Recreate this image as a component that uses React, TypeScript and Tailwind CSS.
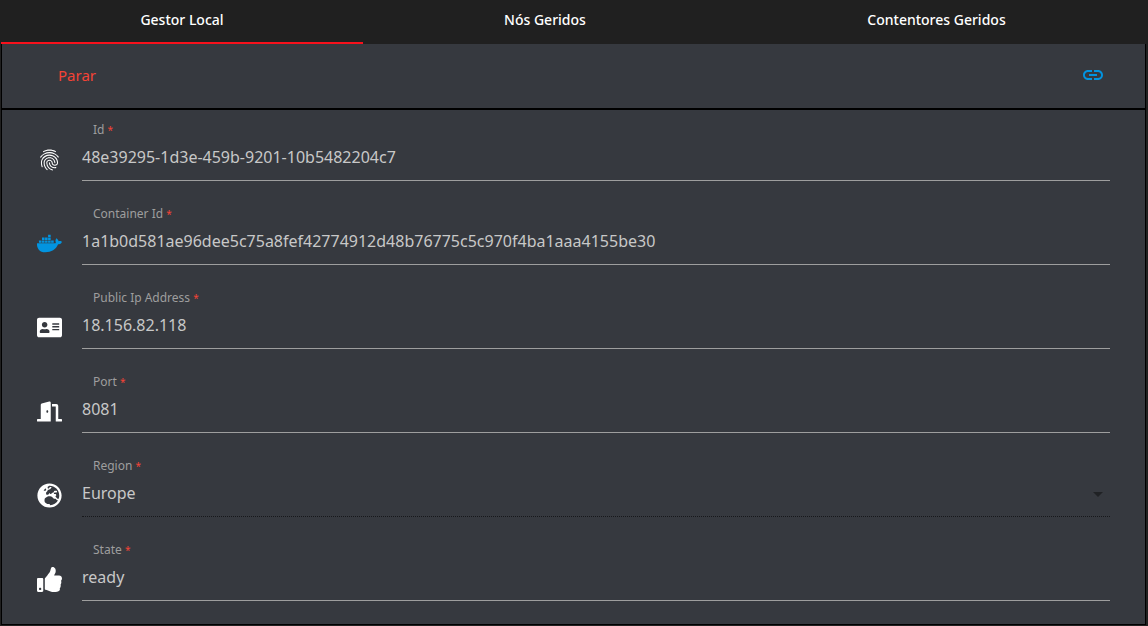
import type { ReactNode } from "react";
import {
  FaAddressCard,
  FaDocker,
  FaDoorOpen,
  FaGlobeEurope,
  FaThumbsUp,
} from "react-icons/fa";
import { MdArrowDropDown, MdFingerprint, MdLink } from "react-icons/md";

const tabs = ["Gestor Local", "Nós Geridos", "Contentores Geridos"];

type Field = {
  id: string;
  label: string;
  value: string;
  icon: ReactNode;
  select?: boolean;
};

const fields: Field[] = [
  {
    id: "id",
    label: "Id",
    value: "48e39295-1d3e-459b-9201-10b5482204c7",
    icon: <MdFingerprint size={26} />,
  },
  {
    id: "containerId",
    label: "Container Id",
    value: "1a1b0d581ae96dee5c75a8fef42774912d48b76775c5c970f4ba1aaa4155be30",
    icon: <FaDocker size={25} className="text-[#0294e0]" />,
  },
  {
    id: "publicIpAddress",
    label: "Public Ip Address",
    value: "18.156.82.118",
    icon: <FaAddressCard size={25} />,
  },
  { id: "port", label: "Port", value: "8081", icon: <FaDoorOpen size={25} /> },
  {
    id: "region",
    label: "Region",
    value: "Europe",
    icon: <FaGlobeEurope size={25} />,
    select: true,
  },
  { id: "state", label: "State", value: "ready", icon: <FaThumbsUp size={25} /> },
];

function FieldRow({ id, label, value, icon, select }: Field) {
  return (
    <div className="flex h-[84px] gap-5">
      <span className="flex w-[25px] shrink-0 items-start justify-center pt-[37px] text-white">
        {icon}
      </span>
      <div className="flex min-w-0 flex-1 flex-col">
        <label
          htmlFor={id}
          className="pt-3 pl-[11px] text-xs leading-4 text-[#9e9e9e]"
        >
          {label} <span className="text-[10px] text-[#f44336]">*</span>
        </label>
        {select ? (
          <div className="relative flex">
            <select
              id={id}
              defaultValue={value}
              className="h-[43px] w-full appearance-none border-b border-dotted border-[#17181b] bg-transparent pb-1 text-base leading-6 text-[#c8c8c8] outline-none"
            >
              <option>{value}</option>
            </select>
            <MdArrowDropDown
              size={24}
              className="pointer-events-none absolute top-2 right-0 text-[#202225]"
            />
          </div>
        ) : (
          <input
            id={id}
            readOnly
            defaultValue={value}
            className="h-[43px] w-full border-b border-[#9e9e9e] bg-transparent pb-1 text-base leading-6 text-[#c8c8c8] outline-none"
          />
        )}
      </div>
    </div>
  );
}

export default function App() {
  return (
    <div className="min-h-screen bg-[#202020] pr-0.5 pl-px font-['Noto_Sans',sans-serif]">
      <nav role="tablist" className="grid h-11 grid-cols-[362fr_364fr_419fr]">
        {tabs.map((tab, index) => (
          <button
            key={tab}
            type="button"
            role="tab"
            aria-selected={index === 0}
            className="border-b-2 border-transparent pb-0.5 text-sm font-medium text-white aria-selected:border-[#f8111c]"
          >
            {tab}
          </button>
        ))}
      </nav>
      <main className="border-x border-b border-black bg-[#36393f]">
        <header className="flex h-[66px] items-center justify-between border-b-2 border-black pr-10 pl-14">
          <button type="button" className="pb-0.5 text-[15px] text-[#f44336]">
            Parar
          </button>
          <a href="#link" aria-label="Link" className="pb-0.5 text-[#0294e0]">
            <MdLink size={24} />
          </a>
        </header>
        <form className="pr-[35px] pb-[10px] pl-[35px]">
          {fields.map((field) => (
            <FieldRow key={field.id} {...field} />
          ))}
        </form>
      </main>
    </div>
  );
}
